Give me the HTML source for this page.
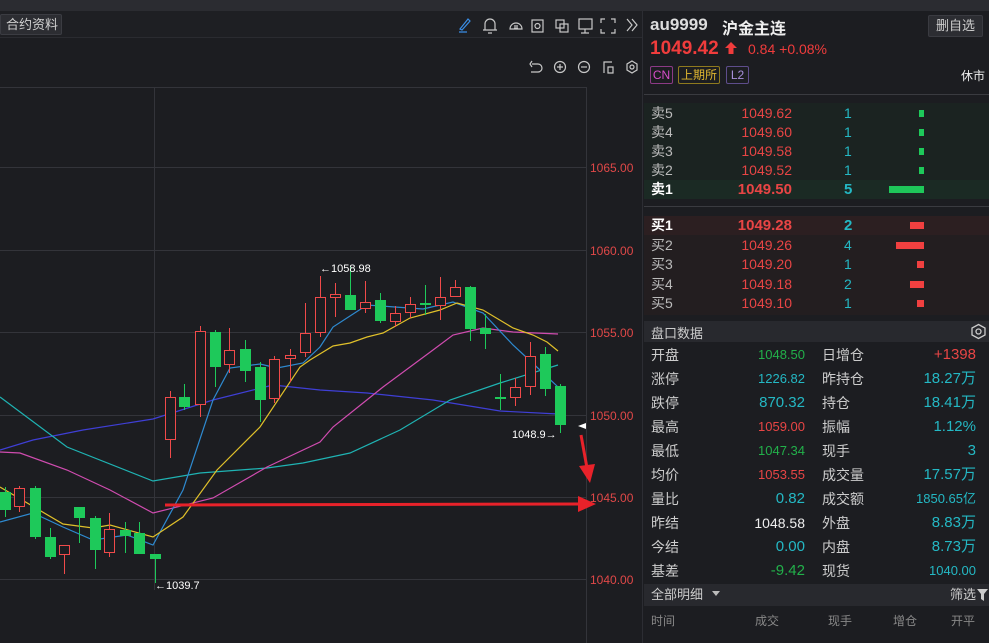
<!DOCTYPE html>
<html><head><meta charset="utf-8"><style>
*{margin:0;padding:0;box-sizing:border-box}
body{width:989px;height:643px;background:#1c1d21;font-family:"Liberation Sans","Noto Sans CJK SC",sans-serif;overflow:hidden;position:relative;color:#ccc}
.abs{position:absolute}
.t{position:absolute;white-space:nowrap}
.r{text-align:right}
</style></head><body>
<div class="abs" style="left:0;top:0;width:989px;height:11px;background:#2b2c31"></div>
<div class="abs" style="left:0;top:11px;width:643px;height:27px;background:#1e1f23;border-bottom:1px solid #2a2b30"></div>
<div class="abs" style="left:0;top:14px;width:62px;height:21px;background:#2c2d32;border:1px solid #3b3c42;border-radius:2px;color:#d0d0d0;font-size:13px;line-height:19px;padding-left:5px">合约资料</div>
<svg class="abs" style="left:455px;top:14px" width="190" height="22" fill="none" stroke="#c8c8c8" stroke-width="1.2">
<path d="M5 15 L13 5 L15 7 L7 16 Z M4 18 H12" stroke="#3a8ee6"/>
<path d="M30 16 V10 a5 5 0 0 1 10 0 V16 Z M28 16 H42 M33 19 H37"/>
<path d="M55 15 a6 6 0 1 1 12 0 Z M59 12 H63 M59 14 H63"/>
<rect x="77" y="6" width="11" height="12"/><circle cx="82.5" cy="12" r="2.5"/>
<rect x="101" y="6" width="8" height="8"/><rect x="105" y="10" width="8" height="8"/>
<rect x="124" y="5" width="13" height="10"/><path d="M130 15 V19 M126 19 H134"/>
<path d="M146 9 V5 H150 M156 5 H160 V9 M160 15 V19 H156 M150 19 H146 V15"/>
<path d="M172 5 L177 11 L172 17 M177 5 L182 11 L177 17"/>
</svg>
<svg class="abs" style="left:527px;top:58px" width="115" height="20" fill="none" stroke="#c8c8c8" stroke-width="1.2">
<path d="M5 6 H11 a4 4 0 0 1 0 8 H4 M5 3 L3 6 L5 9"/>
<circle cx="33" cy="9" r="5.5"/><path d="M30 9 H36 M33 6 V12"/>
<circle cx="57" cy="9" r="5.5"/><path d="M54 9 H60"/>
<path d="M77 15 V4 H85 M81 9 H86 V15 H81 Z"/>
<path d="M105 3 L110 6 V12 L105 15 L100 12 V6 Z"/><circle cx="105" cy="9" r="2"/>
</svg>
<svg class="abs" style="left:0;top:0" width="643" height="643">
<g stroke="#33343a" stroke-width="1">
<line x1="0" y1="87.5" x2="586" y2="87.5"/>
<line x1="0" y1="167.5" x2="586" y2="167.5"/><line x1="0" y1="250.5" x2="586" y2="250.5"/>
<line x1="0" y1="332.5" x2="586" y2="332.5"/><line x1="0" y1="415.5" x2="586" y2="415.5"/>
<line x1="0" y1="497.5" x2="586" y2="497.5"/><line x1="0" y1="579.5" x2="586" y2="579.5"/>
<line x1="154.5" y1="87" x2="154.5" y2="590"/>
<line x1="586.5" y1="87" x2="586.5" y2="643"/>
<line x1="642.5" y1="11" x2="642.5" y2="643" stroke="#2c2d33"/>
</g>
<g font-size="12" fill="#e04848" font-family="Liberation Sans">
<text x="590" y="172">1065.00</text><text x="590" y="255">1060.00</text><text x="590" y="337">1055.00</text>
<text x="590" y="420">1050.00</text><text x="590" y="502">1045.00</text><text x="590" y="584">1040.00</text>
</g>
<g fill="none" stroke-width="1.2">
<polyline stroke="#3f3fd6" points="0,450 33,440 83,430 153,419 213,400 273,385 320,390 367,393 433,400 500,411 558,414"/>
<polyline stroke="#1fb3b3" points="0,397 67,447 153,481 200,473 267,468 303,463 350,453 400,430 450,400 500,383 558,365"/>
<polyline stroke="#d04cb0" points="0,452 20,453 67,470 110,490 153,513 213,498 267,467 320,442 333,427 383,387 433,350 453,335 483,328 513,332 558,334"/>
<polyline stroke="#2e8ad0" points="0,522 33,513 63,527 93,540 127,535 153,545 183,490 213,400 230,368 260,364 277,368 303,363 320,347 333,327 367,305 423,309 453,302 483,313 513,345 540,370 558,387"/>
<polyline stroke="#e0c02a" points="0,487 63,524 93,528 110,525 153,537 183,517 217,470 260,427 300,367 310,360 333,346 350,343 367,337 383,333 410,318 440,310 457,303 483,310 513,328 533,335 547,342 558,351"/>
</g>
<g id="c"></g>
<line x1="165" y1="505" x2="582" y2="504" stroke="#e8222a" stroke-width="3"/>
<polygon points="578,496 596,504 578,512" fill="#e8222a"/>
<line x1="581" y1="435" x2="587" y2="468" stroke="#e8222a" stroke-width="3"/>
<polygon points="579,466 595,464 590,483" fill="#e8222a"/>
<polygon points="578,426 586,423 586,429" fill="#fff"/>
<g font-size="11" fill="#fff" font-family="Liberation Sans">
<text x="320" y="272">←1058.98</text><text x="155" y="589">←1039.7</text><text x="512" y="438">1048.9→</text>
</g>
</svg>
<script>
var d=[[5,'g',492,510,487,517],[19,'r',488,507,486,512],[35,'g',488,537,486,539],[50,'g',537,557,528,559],[64,'r',545,555,545,574],[79,'g',507,518,507,543],[95,'g',518,550,516,569],[109,'r',529,553,513,557],[125,'g',530,536,522,553],[139,'g',533,554,522,554],[155,'g',554,559,554,583],[170,'r',397,440,391,458],[184,'g',397,407,384,410],[200,'r',331,405,326,417],[215,'g',332,367,330,387],[229,'r',350,365,328,373],[245,'g',349,371,340,382],[260,'g',367,400,362,422],[274,'r',359,399,356,403],[290,'r',355,359,349,382],[305,'r',333,353,303,357],[320,'r',297,333,276,337],[335,'r',294,298,283,317],[350,'g',295,310,267,310],[365,'r',302,309,281,313],[380,'g',300,321,293,323],[395,'r',313,322,306,327],[410,'r',304,313,297,318],[425,'g',303,305,285,315],[440,'r',297,306,277,320],[455,'r',287,297,280,297],[470,'g',287,329,286,341],[485,'g',328,334,314,349],[500,'g',397,399,374,410],[515,'r',387,398,378,406],[530,'r',356,387,342,395],[545,'g',354,389,347,396],[560,'g',386,425,384,433]];
var s='';d.forEach(function(c){var x=c[0],col=c[1]=='g'?'#1ec95a':'#f04a4a';
s+='<line x1="'+(x+.5)+'" y1="'+c[4]+'" x2="'+(x+.5)+'" y2="'+c[5]+'" stroke="'+col+'"/>';
if(c[1]=='g')s+='<rect x="'+(x-5)+'" y="'+c[2]+'" width="11" height="'+Math.max(2,c[3]-c[2])+'" fill="'+col+'"/>';
else s+='<rect x="'+(x-4.5)+'" y="'+(c[2]+.5)+'" width="10" height="'+Math.max(2,c[3]-c[2]-1)+'" fill="#1c1d21" stroke="'+col+'"/>';});
document.getElementById('c').innerHTML=s;
</script>
<!-- right panel -->
<div class="t" style="left:650px;top:15px;font-size:17px;font-weight:bold;color:#ddd">au9999</div>
<div class="t" style="left:722px;top:15px;font-size:16px;font-weight:bold;color:#eee">沪金主连</div>
<div class="abs" style="left:928px;top:15px;width:55px;height:22px;background:#2c2d32;border:1px solid #3a3b41;border-radius:2px;font-size:13px;color:#ccc;text-align:center;line-height:20px">删自选</div>
<div class="t" style="left:650px;top:38px;font-size:19px;font-weight:bold;color:#f03c3c">1049.42</div>
<svg class="abs" style="left:724px;top:41px" width="14" height="15"><polygon points="7,1 13,7 9.5,7 9.5,13 4.5,13 4.5,7 1,7" fill="#f03c3c"/></svg>
<div class="t" style="left:748px;top:41px;font-size:14px;color:#f03c3c">0.84 +0.08%</div>
<div class="abs" style="left:650px;top:66px;width:23px;height:18px;border:1px solid #8c3a86;color:#d54ec9;font-size:12px;line-height:16px;text-align:center;border-radius:2px">CN</div>
<div class="abs" style="left:678px;top:66px;width:42px;height:18px;border:1px solid #8f7a1e;color:#e0b630;font-size:12px;line-height:16px;text-align:center;border-radius:2px">上期所</div>
<div class="abs" style="left:726px;top:66px;width:23px;height:18px;border:1px solid #5e4d8c;color:#a890dd;font-size:12px;line-height:16px;text-align:center;border-radius:2px">L2</div>
<div class="t" style="left:961px;top:67px;font-size:12px;color:#eee">休市</div>
<div class="abs" style="left:644px;top:94px;width:345px;height:1px;background:#3a3b40"></div>
<div class="abs" style="left:644px;top:103px;width:345px;height:77px;background:#1b2321"></div>
<div class="abs" style="left:644px;top:180px;width:345px;height:19px;background:#1b2a24"></div>
<div class="abs" style="left:644px;top:206px;width:345px;height:1px;background:#3a3b40"></div>
<div class="abs" style="left:644px;top:216px;width:345px;height:19px;background:#2c1f21"></div>
<div class="abs" style="left:644px;top:235px;width:345px;height:80px;background:#231e20"></div>
<div id="ob"></div>
<div class="abs" style="left:644px;top:321px;width:345px;height:21px;background:#28292e"></div>
<div class="t" style="left:651px;top:323px;font-size:13px;color:#ccc">盘口数据</div>
<svg class="abs" style="left:970px;top:323px" width="17" height="17" fill="none" stroke="#ccc" stroke-width="1.3"><path d="M8.5 1.5 L15 5 V12 L8.5 15.5 L2 12 V5 Z"/><circle cx="8.5" cy="8.5" r="2.5"/></svg>
<div id="pk"></div>
<div class="abs" style="left:644px;top:584px;width:345px;height:22px;background:#28292e"></div>
<div class="t" style="left:651px;top:585px;font-size:13px;line-height:20px;color:#ccc">全部明细</div>
<svg class="abs" style="left:712px;top:591px" width="9" height="6"><polygon points="0,0 8,0 4,5" fill="#bbb"/></svg>
<div class="t" style="left:950px;top:585px;font-size:13px;line-height:20px;color:#ccc">筛选</div>
<svg class="abs" style="left:977px;top:589px" width="11" height="12"><polygon points="0,0 11,0 7,5 7,12 4,10 4,5" fill="#ccc"/></svg>
<div class="t" style="left:651px;top:612px;font-size:12px;line-height:18px;color:#888">时间</div>
<div class="t" style="left:755px;top:612px;font-size:12px;line-height:18px;color:#888">成交</div>
<div class="t" style="left:828px;top:612px;font-size:12px;line-height:18px;color:#888">现手</div>
<div class="t" style="left:893px;top:612px;font-size:12px;line-height:18px;color:#888">增仓</div>
<div class="t" style="left:951px;top:612px;font-size:12px;line-height:18px;color:#888">开平</div>
<script>
var ob=[['卖5','1049.62','1',104,5,'g'],['卖4','1049.60','1',123,5,'g'],['卖3','1049.58','1',142,5,'g'],['卖2','1049.52','1',161,5,'g'],['卖1','1049.50','5',180,35,'g',1],
['买1','1049.28','2',216,14,'r',1],['买2','1049.26','4',236,28,'r'],['买3','1049.20','1',255,7,'r'],['买4','1049.18','2',275,14,'r'],['买5','1049.10','1',294,7,'r']];
var h='';ob.forEach(function(o){var b=o[6],fs=b?15:14,fw=b?'bold':'normal',st='top:'+o[3]+'px;height:19px;line-height:19px;';
h+='<div class="t" style="left:651px;'+st+'font-size:14px;font-weight:'+fw+';color:'+(b?'#fff':'#bbb')+'">'+o[0]+'</div>';
h+='<div class="t r" style="left:700px;width:92px;'+st+'font-size:'+fs+'px;font-weight:'+fw+';color:#e84545">'+o[1]+'</div>';
h+='<div class="t" style="left:844px;'+st+'font-size:'+fs+'px;font-weight:'+fw+';color:#24b8c4">'+o[2]+'</div>';
h+='<div class="abs" style="left:'+(924-o[4])+'px;width:'+o[4]+'px;top:'+(o[3]+6)+'px;height:7px;background:'+(o[5]=='g'?'#1ec95a':'#f04040')+'"></div>';});
document.getElementById('ob').innerHTML=h;
var pk=[['开盘','1048.50','#22b04a',13,'日增仓','+1398','#e84545',15],['涨停','1226.82','#24b8c4',13,'昨持仓','18.27万','#24b8c4',15],['跌停','870.32','#24b8c4',15,'持仓','18.41万','#24b8c4',15],['最高','1059.00','#e84545',13,'振幅','1.12%','#24b8c4',15],['最低','1047.34','#22b04a',13,'现手','3','#24b8c4',15],['均价','1053.55','#e84545',13,'成交量','17.57万','#24b8c4',15],['量比','0.82','#24b8c4',15,'成交额','1850.65亿','#24b8c4',13],['昨结','1048.58','#eee',14,'外盘','8.83万','#24b8c4',15],['今结','0.00','#24b8c4',15,'内盘','8.73万','#24b8c4',15],['基差','-9.42','#22b04a',15,'现货','1040.00','#24b8c4',13]];
var g='';pk.forEach(function(p,i){var y=344+i*24,st='top:'+y+'px;height:22px;line-height:22px;';
g+='<div class="t" style="left:651px;'+st+'font-size:14px;color:#ccc">'+p[0]+'</div>';
g+='<div class="t r" style="left:700px;width:105px;'+st+'font-size:'+p[3]+'px;color:'+p[2]+'">'+p[1]+'</div>';
g+='<div class="t" style="left:822px;'+st+'font-size:14px;color:#ccc">'+p[4]+'</div>';
g+='<div class="t r" style="left:880px;width:96px;'+st+'font-size:'+p[7]+'px;color:'+p[6]+'">'+p[5]+'</div>';});
document.getElementById('pk').innerHTML=g;
</script>
</body></html>
